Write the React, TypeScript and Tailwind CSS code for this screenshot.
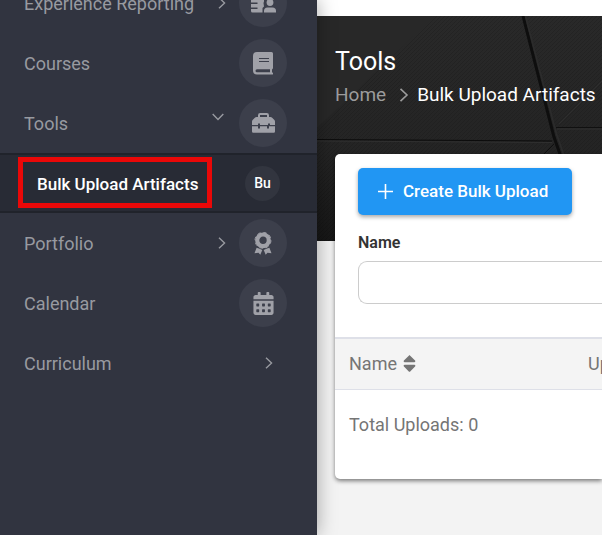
import { FaCalendarAlt, FaSort } from "react-icons/fa";

const Chevron = ({ className }: { className: string }) => (
  <svg viewBox="0 0 14 14" className={`shrink-0 ${className}`} fill="none" stroke="currentColor" strokeWidth="1.6" aria-hidden="true">
    <path d="M3.500 .8 10 7 3.500 13.200" />
  </svg>
);

const ReportIcon = () => (
  <svg viewBox="0 0 26 22" className="h-[22px] w-[26px]" fill="currentColor" aria-hidden="true">
    <path d="M2.500 1h11.500v8.500l-.5 1.500.5 3.500-1.500 1.500V20.500H2.500A1.500 1.500 0 0 1 1 19v-2h6.500v-1.500H1v-3.500h6.500V10.500H1V2.500A1.500 1.500 0 0 1 2.500 1z" />
    <circle cx="20" cy="10.500" r="3.400" />
    <path d="M14 20.500v-1.500a3.500 3.500 0 0 1 3.500-3.500h5a3.500 3.500 0 0 1 3.500 3.500v1.500z" />
  </svg>
);

const BookIcon = () => (
  <svg viewBox="0 0 20 23" className="h-[23px] w-5" fill="currentColor" aria-hidden="true">
    <path
      fillRule="evenodd"
      d="M4 0h14.500A1.500 1.500 0 0 1 20 1.500V16a1.500 1.500 0 0 1-1 1.400v3.100h.3a1 1 0 0 1 0 2H4a4 4 0 0 1-4-4V4a4 4 0 0 1 4-4zM6 6v1h10V6zM6 9v1h10V9zM4 17.300a1.500 1.500 0 0 0 0 3h13v-3z"
    />
  </svg>
);

const ToolboxIcon = () => (
  <svg viewBox="0 0 23 20" className="h-5 w-[23px]" fill="currentColor" aria-hidden="true">
    <path
      fillRule="evenodd"
      d="M6 4V2.200A2.200 2.200 0 0 1 8.200 0h6.600A2.200 2.200 0 0 1 17 2.200V4h1.500c.5 0 1 .2 1.400.6l2.500 2.500c.4.4.6.9.6 1.400V12h-5v-1.500h-2V12H8v-1.500H6V12H0V8.500c0-.5.2-1 .6-1.400l2.500-2.500C3.500 4.200 4 4 4.500 4zM8 4h7V2H8z"
    />
    <path d="M0 13.200h6V15.500h2v-2.300h7v2.300h2v-2.300h6v5.300a1.200 1.200 0 0 1-1.200 1.200H1.200A1.200 1.200 0 0 1 0 18.500z" />
  </svg>
);

const AwardIcon = () => (
  <svg viewBox="0 0 18 23" className="h-[23px] w-[18px]" fill="currentColor" aria-hidden="true">
    <circle cx="9" cy="8.300" r="5.800" fill="none" stroke="currentColor" strokeWidth="4.200" />
    <circle cx="9" cy="8.300" r="8" fill="none" stroke="currentColor" strokeWidth=".9" strokeDasharray="3.500 2.783" />
    <path d="M2.600 15.700 5 16.500 8.300 18 6.300 22.700 4.500 20.800.5 21.200z" />
    <path d="M15.400 15.700 13 16.500 9.700 18 11.700 22.700 13.500 20.800 17.500 21.200z" />
  </svg>
);

const items = [
  { label: "Experience Reporting", icon: <ReportIcon />, arrow: "right" },
  { label: "Courses", icon: <BookIcon />, arrow: "" },
  { label: "Tools", icon: <ToolboxIcon />, arrow: "down" },
  { label: "Portfolio", icon: <AwardIcon />, arrow: "right" },
  { label: "Calendar", icon: <FaCalendarAlt size={23} />, arrow: "" },
  { label: "Curriculum", icon: null, arrow: "right" },
];

const SubMenu = () => (
  <div className="relative h-[60px] border-y-2 border-[#20232b] bg-[#282b35]">
    <a href="#" className="flex h-full items-center justify-between px-[37px] text-[17px] font-medium text-white">
      <span className="pt-0.5">Bulk Upload Artifacts</span>
      <span className="flex size-[35px] items-center justify-center rounded-full bg-[#32353f] text-sm">
        Bu
      </span>
    </a>
    {/* highlight */}
    <div className="pointer-events-none absolute left-[18px] top-0.5 h-[51px] w-[194px] border-5 border-[#ea0808]" />
  </div>
);

const Sidebar = () => (
  <nav className="relative z-20 w-[317px] shrink-0 bg-[#313440] text-lg shadow-[0_0_18px_rgba(0,0,0,0.35)]">
    <ul className="-mt-[27px]">
      {items.map((item) => (
        <li key={item.label}>
          <a href="#" className="flex h-[60px] items-center pl-6 pr-[30px] text-[#989aa0]">
            <span className="grow pt-0.5">{item.label}</span>
            {item.arrow === "right" && (
              <Chevron className={item.icon ? "mr-[11px] size-3" : "mr-3 size-3"} />
            )}
            {item.arrow === "down" && <Chevron className="mb-3 mr-[15px] size-3 rotate-90" />}
            {item.icon && (
              <span className="flex size-12 items-center justify-center rounded-full bg-[#3c3f4b] text-[#a0a1a8]">
                {item.icon}
              </span>
            )}
          </a>
          {item.label === "Tools" && <SubMenu />}
        </li>
      ))}
    </ul>
  </nav>
);

const BannerArt = () => (
  <svg
    viewBox="0 0 285 225"
    preserveAspectRatio="xMinYMin slice"
    className="absolute inset-0 size-full"
    fill="none"
    aria-hidden="true"
  >
    <defs>
      <linearGradient id="shade" x1="0" y1="0" x2="0" y2="1">
        <stop offset="0" stopColor="#292929" />
        <stop offset="0.6" stopColor="#242424" />
        <stop offset="1" stopColor="#171717" />
      </linearGradient>
      <pattern id="weave" width="4" height="4" patternUnits="userSpaceOnUse">
        <path d="M0 4 4 0" stroke="#000" strokeOpacity="0.12" />
      </pattern>
    </defs>
    <rect width="285" height="225" fill="url(#shade)" />
    <rect width="285" height="225" fill="url(#weave)" />
    <path d="M0 0h118L0 112z" fill="#282828" />
    <path d="M0 123.500 235 125" stroke="#0c0c0c" />
    <path d="M0 125 235 126.500" stroke="#303030" />
    <path d="m206 0 31 121 7 20" stroke="#0e0e0e" strokeWidth="3" />
    <path d="m208.500 0 31 118 8 23" stroke="#2c2c2c" strokeWidth="1.500" />
    <path d="M239 111.500h46" stroke="#101010" />
    <path d="M240 113h45" stroke="#303030" />
    <path d="M285 65 242 108" stroke="#2e2e2e" />
    <path d="M226 139l11-11" stroke="#101010" />
  </svg>
);

const Banner = () => (
  <header className="relative h-[225px] bg-[#222]">
    <BannerArt />
    <div className="relative px-[18px] pt-[30px] text-white">
      <h1 className="text-[25px] leading-8">Tools</h1>
      <div className="flex items-center whitespace-nowrap text-[19px] leading-[34px]">
        <a href="#" className="text-[#9c9c9c]">Home</a>
        <Chevron className="ml-[11px] mr-1.5 size-[14px] text-[#9c9c9c]" />
        <span>Bulk Upload Artifacts</span>
      </div>
    </div>
  </header>
);

const UploadCard = () => (
  <section className="relative z-30 -mt-[87px] ml-[18px] h-[325px] rounded-l-[5px] bg-white shadow-[0_2px_4px_rgba(0,0,0,0.5)]">
    <div className="pl-[23px] pt-[14px]">
      <button
        type="button"
        className="flex h-[47px] items-center rounded-[5px] bg-[#2196f3] pl-5 pr-6 text-[17px] font-medium text-white shadow-[0_2px_4px_rgba(0,0,0,0.35)]"
      >
        <svg viewBox="0 0 15 15" className="mr-2.5 size-[15px]" stroke="currentColor" strokeWidth="1.6" aria-hidden="true">
          <path d="M7.500 0v15M0 7.500h15" />
        </svg>
        Create Bulk Upload
      </button>
      <label htmlFor="upload-name" className="mt-4 block text-base font-semibold text-[#333]">
        Name
      </label>
      <input
        id="upload-name"
        type="text"
        className="mt-1.5 block h-[43px] w-full rounded-l-[9px] border border-r-0 border-[#ccc] px-3"
      />
    </div>
    <table className="mt-[33px] w-full table-fixed text-lg text-[#757575]">
      <thead>
        <tr className="h-[51px] border-b border-t-2 border-[#dee0e8] bg-[#f4f4f4] text-left">
          <th className="w-[239px] pl-[14px] font-normal">
            <span className="flex items-center gap-0.5">
              Name <FaSort size={21} />
            </span>
          </th>
          <th className="overflow-hidden whitespace-nowrap pl-[14px] font-normal">Uploaded</th>
        </tr>
      </thead>
      <tbody>
        <tr className="h-[71px]">
          <td colSpan={2} className="pl-[14px]">Total Uploads: 0</td>
        </tr>
      </tbody>
    </table>
  </section>
);

const App = () => {
  return (
    <div className="flex h-screen overflow-hidden bg-[#f3f3f3] font-['Roboto',sans-serif]">
      <Sidebar />
      <main className="min-w-0 grow">
        <div className="h-4 bg-white" />
        <Banner />
        <UploadCard />
      </main>
    </div>
  );
};

export default App;
